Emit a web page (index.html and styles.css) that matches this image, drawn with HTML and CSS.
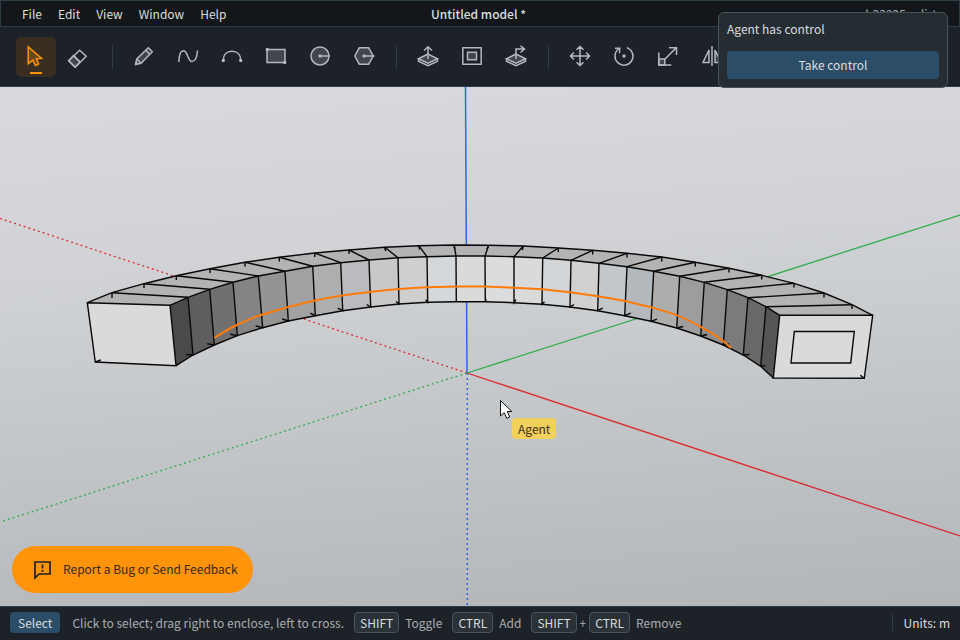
FILE: index.html
```html
<!DOCTYPE html>
<html lang="en">
<head>
<meta charset="utf-8">
<meta name="viewport" content="width=device-width, initial-scale=1">
<title>Untitled model *</title>
<link rel="stylesheet" href="styles.css">
</head>
<body>
<header class="menubar">
  <nav class="menus">
    <button class="menu">File</button>
    <button class="menu">Edit</button>
    <button class="menu">View</button>
    <button class="menu">Window</button>
    <button class="menu">Help</button>
  </nav>
  <h1 class="title">Untitled model *</h1>
  <span class="build">b33925e-dirty</span>
</header>

<div class="toolbar" role="toolbar" aria-label="Tools">
  <button class="tool active" aria-label="Select" aria-pressed="true">
    <svg viewBox="0 0 24 24"><path class="tint" d="M4.200 1.800 17.500 13.400l-5.300.3 2.500 5.200-3.300 1.500-2.600-5.300-4.600 3.600z"/></svg>
  </button>
  <button class="tool" aria-label="Eraser">
    <svg viewBox="0 0 24 24"><path class="tint" d="M5.500 10.500 12 17l-4.800 5.200L.7 15.800z"/><path d="M11.700 5.200 18.200 11.300 7.200 22.200.7 15.800zM5.500 10.500 12 17"/></svg>
  </button>
  <span class="divider"></span>
  <button class="tool" aria-label="Line">
    <svg viewBox="0 0 24 24"><path class="tint" d="M3.500 19.500 4.800 14 16.300 2.800 20.300 6.800 9 18.200zM4.800 14 9 18.200M13.800 5.300l4 4"/><path class="solid" d="m3.200 19.800.8-3.300 2.500 2.500z"/></svg>
  </button>
  <button class="tool" aria-label="Freehand">
    <svg viewBox="0 0 24 24"><path d="M2.800 17C3.200 8 5.300 5.800 7.300 5.800c4.700 0 4.200 10.700 8.700 10.700 3.200 0 5-4 5.500-11"/></svg>
  </button>
  <button class="tool" aria-label="Arc">
    <svg viewBox="0 0 24 24"><path d="M3.300 15.500C3.300 9.500 7 6.300 12 6.300s8.700 3.200 8.700 9.200"/><circle class="dot" cx="3.300" cy="15.500" r="1.700"/><circle class="dot" cx="20.700" cy="15.500" r="1.700"/></svg>
  </button>
  <button class="tool" aria-label="Rectangle">
    <svg viewBox="0 0 24 24"><path class="tint" d="M3 4.500h18v13H3z"/><circle class="dot" cx="3.300" cy="4.500" r="1.700"/><circle class="dot" cx="20.700" cy="17.500" r="1.700"/></svg>
  </button>
  <button class="tool" aria-label="Circle">
    <svg viewBox="0 0 24 24"><circle class="tint" cx="12" cy="11" r="9"/><path d="M12 11h10"/><circle class="dot" cx="12" cy="11" r="1.700"/></svg>
  </button>
  <button class="tool" aria-label="Polygon">
    <svg viewBox="0 0 24 24"><path class="tint" d="M2.800 11 7.300 2.800h9.400L21.200 11l-4.500 8.200H7.300z"/><path d="M12 11h10.500"/><circle class="dot" cx="12" cy="11" r="1.700"/></svg>
  </button>
  <span class="divider"></span>
  <button class="tool" aria-label="Push pull">
    <svg viewBox="0 0 24 24"><path class="tint" d="M12 9 2.500 13.800 12 18.200l9.500-4.400z"/><path d="M2.500 13.800v2.400L12 20.700l9.500-4.500v-2.400M12 14V2M8 5.500 12 1.800l4 3.700"/></svg>
  </button>
  <button class="tool" aria-label="Offset">
    <svg viewBox="0 0 24 24"><path d="M2.800 2.800h18.400v16.400H2.800z"/><path class="tint" d="M7.500 7.200h9v7.600h-9z"/></svg>
  </button>
  <button class="tool" aria-label="Follow me">
    <svg viewBox="0 0 24 24"><path class="tint" d="M12 9 2.500 13.800 12 18.200l9.500-4.400z"/><path d="M2.500 13.800v2.400L12 20.700l9.500-4.500v-2.400M12 14V4h8M16.500.8 20.500 4l-4 3.500"/></svg>
  </button>
  <span class="divider"></span>
  <button class="tool" aria-label="Move">
    <svg viewBox="0 0 24 24"><path d="M12 1.500v19M2.500 11h19M8.500 4.700 12 1.500l3.500 3.200M8.500 17.300l3.500 3.200 3.500-3.200M5.800 7.500 2.500 11l3.300 3.500M18.200 7.500l3.300 3.500-3.300 3.500"/></svg>
  </button>
  <button class="tool" aria-label="Rotate">
    <svg viewBox="0 0 24 24"><path d="M14.800 2.600A9 9 0 1 1 6.500 4M3 3.200l4.800.1-.4 5"/><circle class="dot" cx="12" cy="11" r="1.700"/></svg>
  </button>
  <button class="tool" aria-label="Scale">
    <svg viewBox="0 0 24 24"><path class="tint" d="M2.800 14h6v6h-6z"/><path d="M2.800 7.500V20h12.500M8.500 14.500 20 3M13 2.800h7.500V10"/></svg>
  </button>
  <button class="tool" aria-label="Flip">
    <svg viewBox="0 0 24 24"><path d="M9 5v12.500H3zM12 1v20"/><path class="tint" d="M15 5v12.500h6z"/></svg>
  </button>
</div>

<main class="viewport">
  <svg class="scene" viewBox="0 87 960 519" preserveAspectRatio="xMidYMid slice" role="img" aria-label="Curved beam on the model axes">
    <g class="axes">
      <path class="blue" d="M465.500 87 467 373"/>
      <path class="blue dotted" d="M467.300 373v233"/>
      <path class="red" d="M467 373 960 536"/>
      <path class="red dotted" d="M467 373 0 218.500"/>
      <path class="green" d="M467 373 960 215"/>
      <path class="green dotted" d="M467 373 0 522"/>
    </g>
    <path fill="#b3b3b3" d="M87.300 302.700 112 292.700 144 283.700 176.300 275.700 210 268.700 245 262.300 279.300 257.300 314.700 253 349 250 384.700 247.300 418.700 245.700 454 245 488.700 245.300 523.300 246 558.300 248 592.700 250.300 627 253.300 661.700 257 695.300 262.300 729 268.300 761.700 275.300 794 283.300 824 293 852 304.700 872.700 315.300 779.700 315.300 766 306.700 748 297.700 727.300 289.700 704.300 282.300 679.700 276.300 653.700 271.300 627 266.700 599 263.300 571 260.300 542.700 258 514 256.700 485 256 456 256 427 256.700 398 257.700 369 260 340.700 262.700 312.700 266.300 285 271.300 258.300 276 233 282.300 209.700 289.300 188 297.300 170 305.300z"/>
    <g class="sides">
      <path fill="#4a4a4a" d="M170 305.300 188 297.300 193 355 176 365.700z"/>
      <path fill="#5e5e5e" d="M188 297.300 209.700 289.300 214.300 345 193 355z"/>
      <path fill="#707070" d="M209.700 289.300 233 282.300 237.300 335.700 214.300 345z"/>
      <path fill="#848484" d="M233 282.300 258.300 276 262.700 327.700 237.300 335.700z"/>
      <path fill="#949492" d="M258.300 276 285 271.300 288.300 321 262.700 327.700z"/>
      <path fill="#a1a1a1" d="M285 271.300 312.700 266.300 315.300 315.700 288.300 321z"/>
      <path fill="#adafaf" d="M312.700 266.300 340.700 262.700 342.700 310.700 315.300 315.700z"/>
      <path fill="#babbbf" d="M340.700 262.700 369 260 370.700 307 342.700 310.700z"/>
      <path fill="#cac8c6" d="M369 260 398 257.700 399 304 370.700 307z"/>
      <path fill="#cfcfcf" d="M398 257.700 427 256.700 427.700 302.300 399 304z"/>
      <path fill="#d5d8da" d="M427 256.700 456 256 456.300 301.700 427.700 302.300z"/>
      <path fill="#dadada" d="M456 256 485 256 485.300 301.700 456.300 301.700z"/>
      <path fill="#dcdcdc" d="M485 256 514 256.700 514 302.700 485.300 301.700z"/>
      <path fill="#dadada" d="M514 256.700 542.700 258 542 304.300 514 302.700z"/>
      <path fill="#d1d5d8" d="M542.700 258 571 260.300 570 307 542 304.300z"/>
      <path fill="#d0d0d1" d="M571 260.300 599 263.300 597.700 310.700 570 307z"/>
      <path fill="#c2c7ca" d="M599 263.300 627 266.700 624.700 315.700 597.700 310.700z"/>
      <path fill="#b3b9bc" d="M627 266.700 653.700 271.300 651 321.300 624.700 315.700z"/>
      <path fill="#adadab" d="M653.700 271.300 679.700 276.300 676.700 328 651 321.300z"/>
      <path fill="#9d9d9d" d="M679.700 276.300 704.300 282.300 700.700 336 676.700 328z"/>
      <path fill="#8e8e8e" d="M704.300 282.300 727.300 289.700 723.300 345 700.700 336z"/>
      <path fill="#7b7b7b" d="M727.300 289.700 748 297.700 743.300 355 723.300 345z"/>
      <path fill="#686868" d="M748 297.700 766 306.700 760.700 366.300 743.300 355z"/>
      <path fill="#555555" d="M766 306.700 779.700 315.300 773.300 378 760.700 366.300z"/>
    </g>
    <g class="caps">
      <path d="M87.300 302.700 170 305.300 176 365.700 95.300 362z"/>
      <path d="M779.700 315.300H872.700L864.300 378.300 773.300 378z"/>
      <path d="M794.300 331.500h60L850.700 363H791z"/>
    </g>
    <path class="edges" d="M87.300 302.700 112 292.700 144 283.700 176.300 275.700 210 268.700 245 262.300 279.300 257.300 314.700 253 349 250 384.700 247.300 418.700 245.700 454 245 488.700 245.300 523.300 246 558.300 248 592.700 250.300 627 253.300 661.700 257 695.300 262.300 729 268.300 761.700 275.300 794 283.300 824 293 852 304.700 872.700 315.300M170 305.300 188 297.300 209.700 289.300 233 282.300 258.300 276 285 271.300 312.700 266.300 340.700 262.700 369 260 398 257.700 427 256.700 456 256 485 256 514 256.700 542.700 258 571 260.300 599 263.300 627 266.700 653.700 271.300 679.700 276.300 704.300 282.300 727.300 289.700 748 297.700 766 306.700 779.700 315.300"/>
    <path class="edges" d="M112 292.700 188 297.300M144 283.700 209.700 289.300M176.300 275.700 233 282.300M210 268.700 258.300 276M245 262.300 285 271.300M279.300 257.300 312.700 266.300M314.700 253 340.700 262.700M349 250 369 260M384.700 247.300 398 257.700M418.700 245.700 427 256.700M454 245 456 256M488.700 245.300 485 256M523.300 246 514 256.700M558.300 248 542.700 258M592.700 250.300 571 260.300M627 253.300 599 263.300M661.700 257 627 266.700M695.300 262.300 653.700 271.300M729 268.300 679.700 276.300M761.700 275.300 704.300 282.300M794 283.300 727.300 289.700M824 293 748 297.700M852 304.700 766 306.700"/>
    <path class="edges" d="M112 293v5M144 284v4M176.300 276v4M210 269v4M245 262.500v4M279.300 257.500v4M314.700 253v4M349 250v4M384.700 247.500l1 3.500M418.700 246l1 3.500M454 245l1 4M488.700 245.300l-2 4M523.300 246l-1 4M558.300 248v4M592.700 250.500v4M627 253.500v4M661.700 257.500v4M695.300 262.500v4M729 268.500v4M761.700 275.500v4M794 283.500v4M824 293.500v4M852 305v4"/>
    <path class="edges" d="M176 365.700 193 355 214.300 345 237.300 335.700 262.700 327.700 288.300 321 315.300 315.700 342.700 310.700 370.700 307 399 304 427.700 302.300 456.300 301.700 485.300 301.700 514 302.700 542 304.300 570 307 597.700 310.700 624.700 315.700 651 321.300 676.700 328 700.700 336 723.300 345 743.300 355 760.700 366.300 773.300 378"/>
    <path class="edges" d="M188 297.300 193 355l-7-.5M209.700 289.300 214.300 345l-7-1.200M233 282.300 237.300 335.700l-7-1.400M258.300 276 262.700 327.700l-7-1.700M285 271.300 288.300 321l-6-2M312.700 266.300 315.300 315.700l-5-2.500M340.700 262.700 342.700 310.700l-5-2.500M369 260 370.700 307l-4-2.500M398 257.700 399 304l-3-2.500M427 256.700 427.700 302.300l-2-2.500M456 256 456.300 301.700M485 256 485.300 301.700l1-2.500M514 256.700 514 302.700l2-3M542.700 258 542 304.300l2.500-2.500M571 260.300 570 307l4-2.500M599 263.300 597.700 310.700l5-2.500M627 266.700 624.700 315.700l6-2.500M653.700 271.300 651 321.300l6-2.200M679.700 276.300 676.700 328l6.500-1.500M704.300 282.300 700.700 336l6.500-1.500M727.300 289.700 723.300 345l6-1M748 297.700 743.300 355l6-.5M766 306.700 760.700 366.300l5-.7M95.300 362l5.500-2M864.300 378.300l-4-3"/>
    <path class="curve" d="M214.300 338C222 333 229 328.500 236.700 325 245 321 253 317.500 262 314.700L288 307 312.700 301C331 297 350 294 370 292 389 289.700 408 288 427 287.300L456 286.500H485L514 287.700 542 289.300 570 292.300 598 296.300 625 301 651 307.300C660 309.800 669 312 677 315.300 685 318.500 693 322.500 701 327 711 332.500 722 338.500 731 348"/>
  </svg>

  <button class="feedback">
    <svg viewBox="0 0 24 24"><path d="M5 5h15v12H9l-4 4z"/><path d="M12.500 7.500v4M12.500 13v2"/></svg>
    Report a Bug or Send Feedback
  </button>
</main>

<footer class="statusbar">
  <span class="mode">Select</span>
  <span class="hint">Click to select; drag right to enclose, left to cross.</span>
  <span class="shortcut"><kbd>SHIFT</kbd><span>Toggle</span></span>
  <span class="shortcut"><kbd>CTRL</kbd><span>Add</span></span>
  <span class="shortcut"><span class="combo"><kbd>SHIFT</kbd>+<kbd>CTRL</kbd></span><span>Remove</span></span>
  <span class="units">Units: m</span>
</footer>

<section class="control" aria-label="Agent control">
  <p class="control-text">Agent has control</p>
  <button class="take">Take control</button>
</section>

<div class="agent">
  <svg class="pointer" viewBox="0 0 14 21"><path d="M1.500 1.500V17l3.700-3.300 2.600 5.600 2.900-1.300-2.500-5.500h4.600z"/></svg>
  <span class="agent-name">Agent</span>
</div>
</body>
</html>
```
FILE: styles.css
```css
* {
  box-sizing: border-box;
}

body {
  margin: 0;
  min-height: 100vh;
  display: flex;
  flex-direction: column;
  background: #1d2128;
  color: #dcdedd;
  font: 12px/20px "Noto Sans CJK SC", "Noto Sans", sans-serif;
}

button {
  border: 0;
  padding: 0;
  background: none;
  color: inherit;
  font: inherit;
}

svg {
  display: block;
}

.menubar {
  display: grid;
  grid-template-columns: 1fr auto 1fr;
  align-items: center;
  height: 27px;
  padding: 0 16px 0 13px;
  border: 1px solid #2c3d47;
  background: #131719;
}

.menus {
  display: flex;
}

.menu {
  padding: 0 8px;
}

.title {
  margin: 0;
  font-size: 12px;
  font-weight: 500;
}

.build {
  justify-self: end;
  color: #a9adb0;
}

.toolbar {
  display: flex;
  align-items: center;
  gap: 4px;
  height: 60px;
  padding: 0 16px;
  border-bottom: 1px solid #2c3d47;
  overflow: hidden;
}

.tool {
  flex: none;
  display: grid;
  place-items: center;
  position: relative;
  width: 40px;
  height: 40px;
  border-radius: 6px;
  color: #b4b9bd;
}

.tool svg {
  width: 24px;
  height: 24px;
  overflow: visible;
  fill: none;
  stroke: currentColor;
  stroke-width: 1.5;
}

.tool .tint {
  fill: currentColor;
  fill-opacity: 0.25;
}

.tool .dot,
.tool .solid {
  fill: currentColor;
  stroke: none;
}

.tool.active {
  background: #3a2e22;
  color: #ff930a;
}

.tool.active::after {
  content: "";
  position: absolute;
  left: 14px;
  right: 14px;
  bottom: 3px;
  height: 2px;
  background: #ff930a;
}

.divider {
  flex: none;
  width: 1px;
  height: 24px;
  margin: 0 7px 0 8px;
  background: #2c3d47;
}

.viewport {
  flex: 1;
  position: relative;
  display: flex;
  min-height: 0;
  background: linear-gradient(176deg, #d9dadd, #d0d2d5 33%, #c3c6c9 63%, #b3b6b8);
}

.scene {
  flex: 1;
  width: 100%;
  height: calc(100vh - 121px);
}

.axes,
.edges,
.curve {
  fill: none;
}

.axes {
  stroke-width: 1.3;
}

.red {
  stroke: #db2b2f;
}

.green {
  stroke: #2fae4a;
}

.blue {
  stroke: #2d66ee;
  stroke-width: 1.5;
}

.dotted {
  stroke-dasharray: 2 3;
}

.edges,
.caps {
  stroke: #080808;
  stroke-width: 1.4;
}

.caps {
  fill: #dadada;
}

.curve {
  stroke: #ff7b08;
  stroke-width: 2;
}

.feedback {
  position: absolute;
  left: 12px;
  bottom: 13px;
  display: flex;
  align-items: center;
  gap: 9px;
  padding: 11px 15px 12px 18px;
  border-radius: 24px;
  background: #ff930a;
  color: #35291a;
}

.feedback svg {
  width: 24px;
  height: 24px;
  fill: none;
  stroke: #1d2128;
  stroke-width: 1.7;
}

.statusbar {
  display: flex;
  align-items: center;
  gap: 10px;
  height: 34px;
  padding: 0 10px 2px;
  border-top: 1px solid #2c3d47;
  color: #a9adb0;
  line-height: 21px;
  white-space: nowrap;
}

.mode {
  margin-right: 2px;
  padding: 0 8px;
  border-radius: 4px;
  background: #2b4d68;
  color: #dcdedd;
}

.shortcut {
  display: flex;
  align-items: center;
  gap: 6px;
}

.combo {
  display: flex;
  align-items: center;
  gap: 3px;
}

kbd {
  padding: 0 5px;
  border: 1px solid #465660;
  border-radius: 4px;
  background: #2a3137;
  color: #dcdedd;
  font: inherit;
  line-height: 19px;
}

.units {
  margin-left: auto;
  padding-left: 11px;
  border-left: 1px solid #2c3d47;
  color: #dcdedd;
  line-height: 17px;
}

.control {
  position: absolute;
  top: 12px;
  right: 12px;
  width: 230px;
  padding: 6px 8px 8px;
  border: 1px solid #46545e;
  border-radius: 6px;
  background: #252c32;
}

.control-text {
  margin: 0 0 12px;
}

.take {
  width: 100%;
  padding: 4px 0;
  border-radius: 4px;
  background: #2b4d68;
}

.agent {
  position: absolute;
  left: 499px;
  top: 399px;
}

.pointer {
  width: 14px;
  height: 21px;
  fill: #fff;
  stroke: #111;
}

.agent-name {
  position: absolute;
  left: 13px;
  top: 19px;
  padding: 0 6px;
  border-radius: 4px;
  background: #f1d15c;
  color: #432b22;
  line-height: 21px;
}
```
